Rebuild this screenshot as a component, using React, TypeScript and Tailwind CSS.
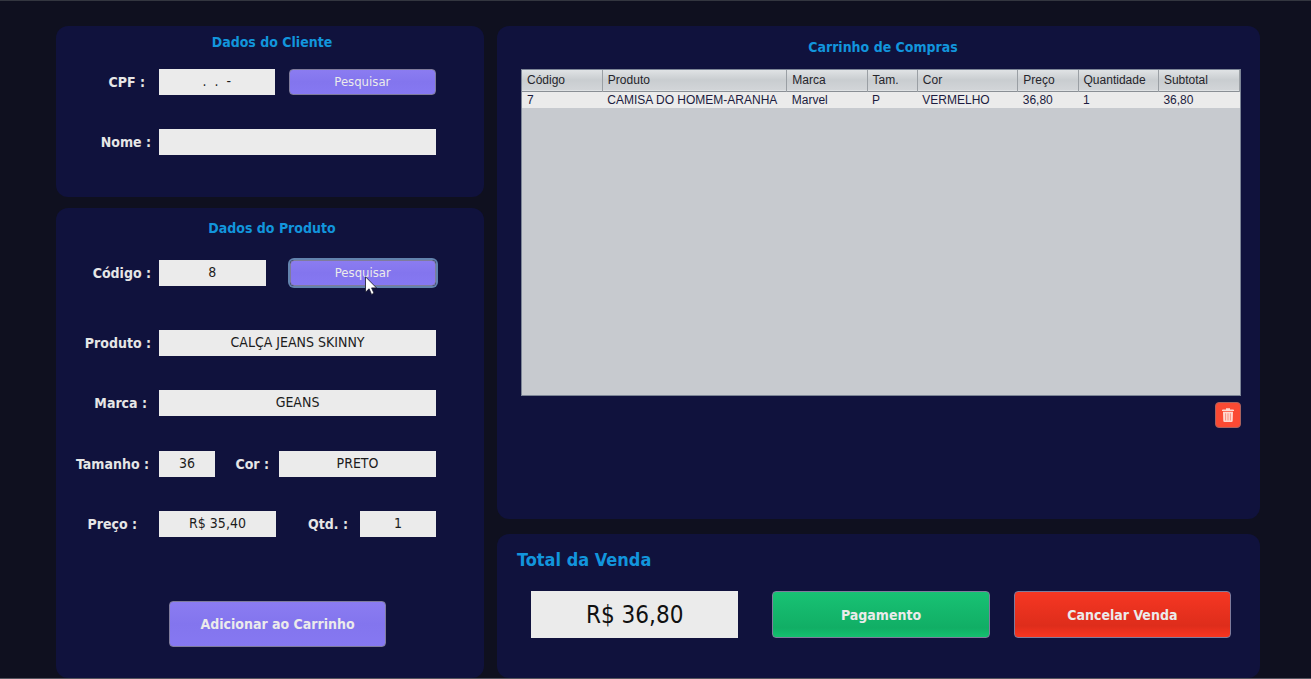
import type { ReactNode } from "react";

const fieldBase =
  "h-[26px] w-0 min-w-0 rounded-none bg-[#ebebeb] px-0 pt-0 pb-0.5 text-center text-sm text-[#1c1c1c] outline-none";
const labelText = "shrink-0 text-right text-sm font-bold text-[#e6e6e6]";
const labelBase = `w-[103px] ${labelText}`;
const buttonBase = "rounded-[4px] border border-[#7f7c9c] text-[#ebebeb]";
const violet = "bg-linear-to-b from-[#8b7cf1] via-[#8375ee] to-[#8678f2]";

function Panel({ className, children }: { className: string; children: ReactNode }) {
  return <section className={`rounded-xl bg-[#10123d] ${className}`}>{children}</section>;
}

function Heading({ children }: { children: ReactNode }) {
  return <h2 className="pl-1 text-center text-sm leading-5 font-bold text-[#1295dc]">{children}</h2>;
}

function Row({ children, className = "" }: { children: ReactNode; className?: string }) {
  return <div className={`flex items-center pr-12 ${className}`}>{children}</div>;
}

function Pointer() {
  return (
    <svg
      viewBox="0 0 12 19"
      className="pointer-events-none absolute top-4 left-[75px] h-[19px] w-3"
      aria-hidden="true"
    >
      <path
        d="M.5.8v15.4l3.6-3.4 2.4 5.6 2.5-1.1-2.4-5.4h4.9z"
        fill="#fff"
        stroke="#15152b"
        strokeWidth="0.8"
      />
    </svg>
  );
}

function TrashIcon() {
  return (
    <svg viewBox="0 0 14 16" className="h-4 w-3.5" aria-hidden="true">
      <path d="M1 3.200Q1 2.500 2 2.500H5V1.200h4v1.300h3q1 0 1 .7V4H1z" fill="#ffd9d0" />
      <path d="M2 4.800h10l-.3 9.200a1.200 1.200 0 0 1-1.200 1.100H3.500A1.200 1.200 0 0 1 2.300 14z" fill="#ffd9d0" />
      <path d="M4.600 6.300v7.200M7 6.300v7.200M9.400 6.300v7.200" stroke="#f4705c" strokeWidth="0.7" />
    </svg>
  );
}

const columns = [
  { name: "Código", value: "7", width: "w-[11.2%]" },
  { name: "Produto", value: "CAMISA DO HOMEM-ARANHA", width: "w-[25.7%]" },
  { name: "Marca", value: "Marvel", width: "w-[11.2%]" },
  { name: "Tam.", value: "P", width: "w-[7%]" },
  { name: "Cor", value: "VERMELHO", width: "w-[14%]" },
  { name: "Preço", value: "36,80", width: "w-[8.4%]" },
  { name: "Quantidade", value: "1", width: "w-[11.2%]" },
  { name: "Subtotal", value: "36,80", width: "w-[11.3%]" },
];

export default function App() {
  return (
    <main className="grid min-h-screen grid-cols-[428fr_763fr] gap-x-[13px] border-t border-b border-t-[#33363f] border-b-[#55555f] bg-[#0f101f] pt-[25px] pr-[51px] pl-14 font-['DejaVu_Sans_Condensed','DejaVu_Sans','Noto_Sans',sans-serif]">
      <div className="flex min-w-0 flex-col gap-[11px]">
        <Panel className="pt-1.5 pb-[42px]">
          <Heading>Dados do Cliente</Heading>
          <Row className="mt-[17px]">
            <label htmlFor="cpf" className={`${labelBase} pr-3.5`}>CPF :</label>
            <input id="cpf" defaultValue=".  .  -" className={`${fieldBase} flex-[117] whitespace-pre`} />
            <button className={`${buttonBase} ${violet} ml-3.5 h-[26px] flex-[147] text-[13px]`}>Pesquisar</button>
          </Row>
          <Row className="mt-[34px]">
            <label htmlFor="nome" className={`${labelBase} pr-2`}>Nome :</label>
            <input id="nome" className={`${fieldBase} flex-1`} />
          </Row>
        </Panel>

        <Panel className="flex-1 pt-2.5 pb-[29px]">
          <Heading>Dados do Produto</Heading>
          <Row className="mt-[22px]">
            <label htmlFor="codigo" className={`${labelBase} pr-2`}>Código :</label>
            <input id="codigo" defaultValue="8" className={`${fieldBase} flex-[107]`} />
            <div className="relative ml-6 flex flex-[147]">
              <button className={`${buttonBase} ${violet} h-[26px] flex-1 text-[13px] ring-2 ring-[#6283ae]`}>
                Pesquisar
              </button>
              <Pointer />
            </div>
          </Row>
          <Row className="mt-11">
            <label htmlFor="produto" className={`${labelBase} pr-2`}>Produto :</label>
            <input id="produto" defaultValue="CALÇA JEANS SKINNY" className={`${fieldBase} flex-1`} />
          </Row>
          <Row className="mt-[34px]">
            <label htmlFor="marca" className={`${labelBase} pr-3`}>Marca :</label>
            <input id="marca" defaultValue="GEANS" className={`${fieldBase} flex-1`} />
          </Row>
          <Row className="mt-[35px]">
            <label htmlFor="tamanho" className={`${labelBase} pr-2.5`}>Tamanho :</label>
            <input id="tamanho" defaultValue="36" className={`${fieldBase} flex-[56]`} />
            <label htmlFor="cor" className={`${labelText} w-16 pr-2.5`}>Cor :</label>
            <input id="cor" defaultValue="PRETO" className={`${fieldBase} flex-[157]`} />
          </Row>
          <Row className="mt-[34px]">
            <label htmlFor="preco" className={`${labelBase} pr-[22px]`}>Preço :</label>
            <input id="preco" defaultValue="R$ 35,40" className={`${fieldBase} flex-[117]`} />
            <label htmlFor="qtd" className={`${labelText} w-[84px] pr-3`}>Qtd. :</label>
            <input id="qtd" defaultValue="1" className={`${fieldBase} flex-[76]`} />
          </Row>
          <div className="mt-16 pr-[98px] pl-[113px]">
            <button className={`${buttonBase} ${violet} h-[46px] w-full text-sm font-bold`}>
              Adicionar ao Carrinho
            </button>
          </div>
        </Panel>
      </div>

      <div className="flex min-w-0 flex-col gap-[15px]">
        <Panel className="flex flex-1 flex-col pt-[11px] pr-[19px] pb-[91px] pl-6">
          <Heading>Carrinho de Compras</Heading>
          <div className="mt-3 flex-1 border border-[#7c8596] bg-[#c7cacf]">
            <table className="w-full table-fixed border-collapse font-['Liberation_Sans',Arial,sans-serif] text-xs text-[#25252b]">
              <thead>
                <tr className="h-[21px] border-b border-[#8a8f95] bg-linear-to-b from-[#e0e3e5] via-[#c9cdd0] to-[#d2d5d8]">
                  {columns.map((c) => (
                    <th
                      key={c.name}
                      className={`${c.width} border-r border-[#9a9fa4] p-0 pl-[5px] text-left font-normal`}
                    >
                      {c.name}
                    </th>
                  ))}
                </tr>
              </thead>
              <tbody>
                <tr className="bg-[#ebebeb] text-[#1c1c40]">
                  {columns.map((c) => (
                    <td key={c.name} className="p-0 pl-[5px] leading-4 whitespace-nowrap">{c.value}</td>
                  ))}
                </tr>
              </tbody>
            </table>
          </div>
          <button
            aria-label="Remover item"
            className="mt-1.5 flex size-[26px] items-center justify-center self-end rounded-[4px] border border-[#a8625f] bg-[#fb4a33]"
          >
            <TrashIcon />
          </button>
        </Panel>

        <Panel className="pt-3 pr-[29px] pb-10 pl-5">
          <h2 className="text-lg leading-7 font-bold text-[#1295dc]">
            <label htmlFor="total">Total da Venda</label>
          </h2>
          <div className="mt-[17px] flex pl-3.5">
            <input
              id="total"
              defaultValue="R$ 36,80"
              className="h-[47px] w-0 min-w-0 flex-[209] bg-[#ebebeb] text-center text-2xl text-[#111] outline-none"
            />
            <button
              className={`${buttonBase} ml-[34px] h-[47px] flex-[217] bg-linear-to-b from-[#18c274] via-[#11ae65] via-80% to-[#13c16f] text-sm font-bold`}
            >
              Pagamento
            </button>
            <button
              className={`${buttonBase} ml-6 h-[47px] flex-[217] bg-linear-to-b from-[#f63723] via-[#de2d1b] via-75% to-[#f93520] text-sm font-bold`}
            >
              Cancelar Venda
            </button>
          </div>
        </Panel>
      </div>
    </main>
  );
}
